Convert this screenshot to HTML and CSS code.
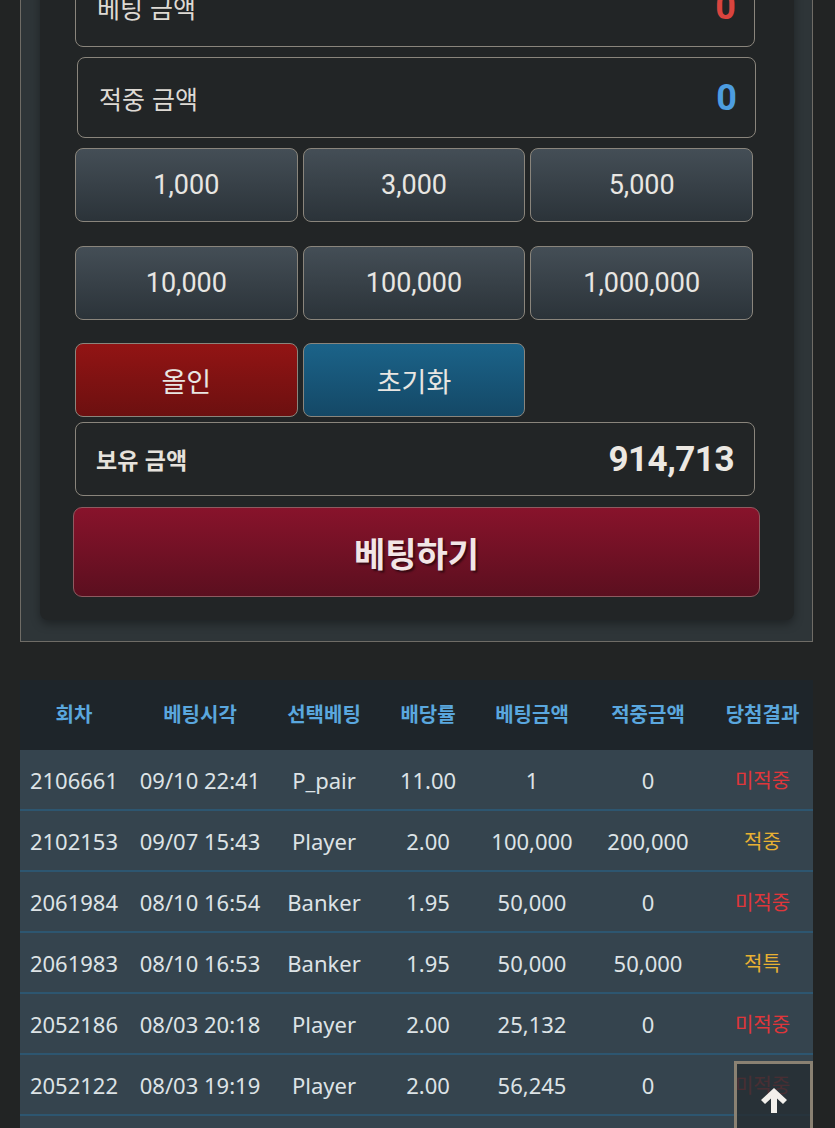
FILE: index.html
```html
<!DOCTYPE html>
<html lang="ko">
<head>
  <meta charset="UTF-8">
  <title>베팅</title>
  <link rel="stylesheet" href="styles.css">
</head>
<body>
  <div class="page">
    <!-- bet panel -->
    <div class="panel">
      <div class="panel-inner">
        <div class="info-box">
          <span class="info-label">베팅 금액</span>
          <span class="info-value red">0</span>
        </div>
        <div class="info-box second">
          <span class="info-label">적중 금액</span>
          <span class="info-value blue">0</span>
        </div>

        <div class="chip-row">
          <button class="chip">1,000</button>
          <button class="chip">3,000</button>
          <button class="chip">5,000</button>
        </div>
        <div class="chip-row gap-top">
          <button class="chip">10,000</button>
          <button class="chip">100,000</button>
          <button class="chip">1,000,000</button>
        </div>
        <div class="chip-row gap-top">
          <button class="chip allin">올인</button>
          <button class="chip reset">초기화</button>
          <span></span>
        </div>

        <div class="balance-box">
          <span class="balance-label">보유 금액</span>
          <span class="balance-value">914,713</span>
        </div>

        <button class="bet-btn">베팅하기</button>
      </div>
    </div>

    <!-- history -->
    <table class="history">
      <thead>
        <tr>
          <th class="c1">회차</th>
          <th class="c2">베팅시각</th>
          <th class="c3">선택베팅</th>
          <th class="c4">배당률</th>
          <th class="c5">베팅금액</th>
          <th class="c6">적중금액</th>
          <th class="c7">당첨결과</th>
        </tr>
      </thead>
      <tbody>
        <tr><td>2106661</td><td>09/10 22:41</td><td>P_pair</td><td>11.00</td><td>1</td><td>0</td><td class="lose">미적중</td></tr>
        <tr><td>2102153</td><td>09/07 15:43</td><td>Player</td><td>2.00</td><td>100,000</td><td>200,000</td><td class="win">적중</td></tr>
        <tr><td>2061984</td><td>08/10 16:54</td><td>Banker</td><td>1.95</td><td>50,000</td><td>0</td><td class="lose">미적중</td></tr>
        <tr><td>2061983</td><td>08/10 16:53</td><td>Banker</td><td>1.95</td><td>50,000</td><td>50,000</td><td class="win">적특</td></tr>
        <tr><td>2052186</td><td>08/03 20:18</td><td>Player</td><td>2.00</td><td>25,132</td><td>0</td><td class="lose">미적중</td></tr>
        <tr><td>2052122</td><td>08/03 19:19</td><td>Player</td><td>2.00</td><td>56,245</td><td>0</td><td class="lose">미적중</td></tr>
        <tr><td>2052101</td><td>08/03 19:02</td><td>Player</td><td>2.00</td><td>30,000</td><td>0</td><td class="lose">미적중</td></tr>
      </tbody>
    </table>
  </div>

  <button class="to-top" aria-label="top">
    <svg width="30" height="28" viewBox="0 0 30 28">
      <path d="M15 2 L28 14 L24 18 L18 12.5 L18 27 L12 27 L12 12.5 L6 18 L2 14 Z" fill="#f2f0ec"/>
    </svg>
  </button>
</body>
</html>
```

FILE: styles.css
```css
body {
  margin: 0;
  background: #222424;
  font-family: Roboto, "Noto Sans CJK KR", sans-serif;
  color: #e2dfda;
  overflow: hidden;
}
.page { padding: 0 22px 0 20px; }

.panel {
  margin-top: -75px;
  border: 1px solid #6f6c66;
  background: #2e3538;
  padding: 20px 18px 21px 19px;
}
.panel-inner {
  background: #222526;
  border-radius: 8px;
  box-shadow: 0 4px 10px rgba(0, 0, 0, 0.35);
  padding: 20px 39px 23px 35px;
}

.info-box {
  height: 79px;
  border: 1px solid #8a857c;
  border-radius: 8px;
  display: flex;
  align-items: center;
  justify-content: space-between;
  padding: 0 18px 0 21px;
}
.info-box.second { margin-top: 10px; margin-left: 2px; margin-right: -1px; }
.info-label { font-size: 25px; font-family: "Noto Sans CJK KR", sans-serif; color: #dedad4; }
.info-value { font-size: 36px; font-weight: bold; }
.info-value.red { color: #d9443e; }
.info-value.blue { color: #4d9de0; }

.chip-row {
  display: grid;
  grid-template-columns: 1fr 1fr 1fr;
  gap: 5px;
  margin-top: 10px;
  margin-right: 2px;
}
.chip-row.gap-top { margin-top: 24px; }
.chip-row.gap-top + .chip-row.gap-top { margin-top: 23px; }
.chip {
  height: 74px;
  border: 1px solid #8a857c;
  border-radius: 8px;
  background: linear-gradient(#444e56, #2b3339);
  color: #e8e6e2;
  font-family: Roboto, "Noto Sans CJK KR", sans-serif;
  font-size: 27px;
  cursor: pointer;
}
.chip.allin { background: linear-gradient(#921414, #6c1010); font-family: "Noto Sans CJK KR", sans-serif; }
.chip.reset { background: linear-gradient(#1b6389, #144866); font-family: "Noto Sans CJK KR", sans-serif; }

.balance-box {
  margin-top: 5px;
  height: 72px;
  border: 1px solid #8a857c;
  border-radius: 8px;
  display: flex;
  align-items: center;
  justify-content: space-between;
  padding: 0 20px 0 20px;
}
.balance-label { font-family: "Noto Sans CJK KR", sans-serif; font-size: 23px; font-weight: bold; color: #e6e2dc; }
.balance-value { font-size: 35px; font-weight: bold; color: #ece8e2; letter-spacing: -0.5px; }

.bet-btn {
  display: block;
  width: calc(100% + 7px);
  margin: 11px -5px 0 -2px;
  height: 90px;
  border: 1px solid #8e5a60;
  border-radius: 9px;
  background: linear-gradient(#88132b, #5b0f1f);
  color: #f2e6e6;
  font-family: "Noto Sans CJK KR", sans-serif;
  font-size: 34px;
  font-weight: bold;
  text-shadow: 2px 2px 2px rgba(0, 0, 0, 0.5);
  cursor: pointer;
}

.history {
  width: 100%;
  margin-top: 38px;
  border-collapse: collapse;
  table-layout: fixed;
  font-family: "Noto Sans", "Noto Sans CJK KR", sans-serif;
}
.history th {
  height: 66px;
  background: #1e252a;
  color: #5aa7de;
  font-family: "Noto Sans CJK KR", sans-serif;
  font-size: 20px;
  font-weight: bold;
  padding: 0 0 4px;
}
.history .c1 { width: 108px; }
.history .c2 { width: 144px; }
.history .c3 { width: 104px; }
.history .c4 { width: 104px; }
.history .c5 { width: 104px; }
.history .c6 { width: 128px; }
.history .c7 { width: 101px; }
.history td {
  height: 59px;
  padding: 0;
  background: #35444e;
  border-bottom: 2px solid #2d5670;
  text-align: center;
  font-size: 22px;
  color: #dde3e6;
}
.history td.lose { color: #e0363a; font-size: 20px; }
.history td.win { color: #e8b133; font-size: 20px; }

.to-top {
  position: fixed;
  right: 22px;
  top: 1061px;
  width: 79px;
  height: 80px;
  border: 3px solid #8a8172;
  background: rgba(38, 45, 50, 0.82);
  padding: 22px 0 0;
  display: flex;
  justify-content: center;
  align-items: flex-start;
}
```
